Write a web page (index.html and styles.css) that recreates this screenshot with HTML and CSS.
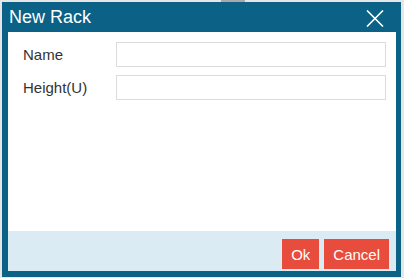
FILE: index.html
```html
<!DOCTYPE html>
<html>
<head>
<meta charset="utf-8">
<link rel="stylesheet" href="styles.css">
</head>
<body>
<div class="dialog">
  <div class="header">
    <span class="title">New Rack</span>
    <span class="close">
      <svg width="18" height="17" viewBox="0 0 18 17"><path d="M1 0.5 L17 16.5 M17 0.5 L1 16.5" stroke="#fff" stroke-width="1.6" fill="none"/></svg>
    </span>
  </div>
  <div class="content">
    <div class="row">
      <label class="label">Name</label>
      <input class="input" type="text">
    </div>
    <div class="row">
      <label class="label">Height(U)</label>
      <input class="input" type="text">
    </div>
  </div>
  <div class="footer">
    <button class="btn">Ok</button>
    <button class="btn">Cancel</button>
  </div>
</div>
</body>
</html>
```

FILE: styles.css
```css
html, body {
  margin: 0;
  height: 100%;
}
body {
  padding: 2px 0 0 2px;
  box-sizing: border-box;
  background: linear-gradient(#a9a9a9, #a9a9a9) 221px 0 / 24px 2px no-repeat, #e6e6e6;
  font-family: "Liberation Sans", Arial, sans-serif;
}
.dialog {
  width: 399px;
  height: 275px;
  box-sizing: border-box;
  background: #0b6186;
  padding: 0 5px 6px 6px;
  display: flex;
  flex-direction: column;
}
.header {
  height: 30px;
  display: flex;
  align-items: center;
  justify-content: space-between;
  padding: 0 12px 0 1px;
}
.title {
  color: #fff;
  font-size: 18px;
}
.close {
  display: flex;
  width: 18px;
  height: 17px;
  margin-top: 2px;
}
.content {
  flex: 1;
  background: #fff;
  padding: 10px 10px 0 15px;
  display: flex;
  flex-direction: column;
  gap: 8px;
}
.row {
  display: flex;
  align-items: center;
  height: 25px;
}
.label {
  width: 93px;
  font-size: 15px;
  color: #333;
}
.input {
  flex: 1;
  height: 25px;
  box-sizing: border-box;
  border: 1px solid #dcdcdc;
  margin: 0;
  padding: 0 6px;
  outline: none;
}
.footer {
  height: 40px;
  box-sizing: border-box;
  background: #daebf3;
  display: flex;
  justify-content: flex-end;
  align-items: flex-end;
  gap: 5px;
  padding: 0 7px 2px 0;
}
.btn {
  height: 30px;
  border: none;
  margin: 0;
  padding: 0 9px;
  background: #e74c3c;
  color: #fff;
  font-family: "Liberation Sans", Arial, sans-serif;
  font-size: 15px;
}
```
